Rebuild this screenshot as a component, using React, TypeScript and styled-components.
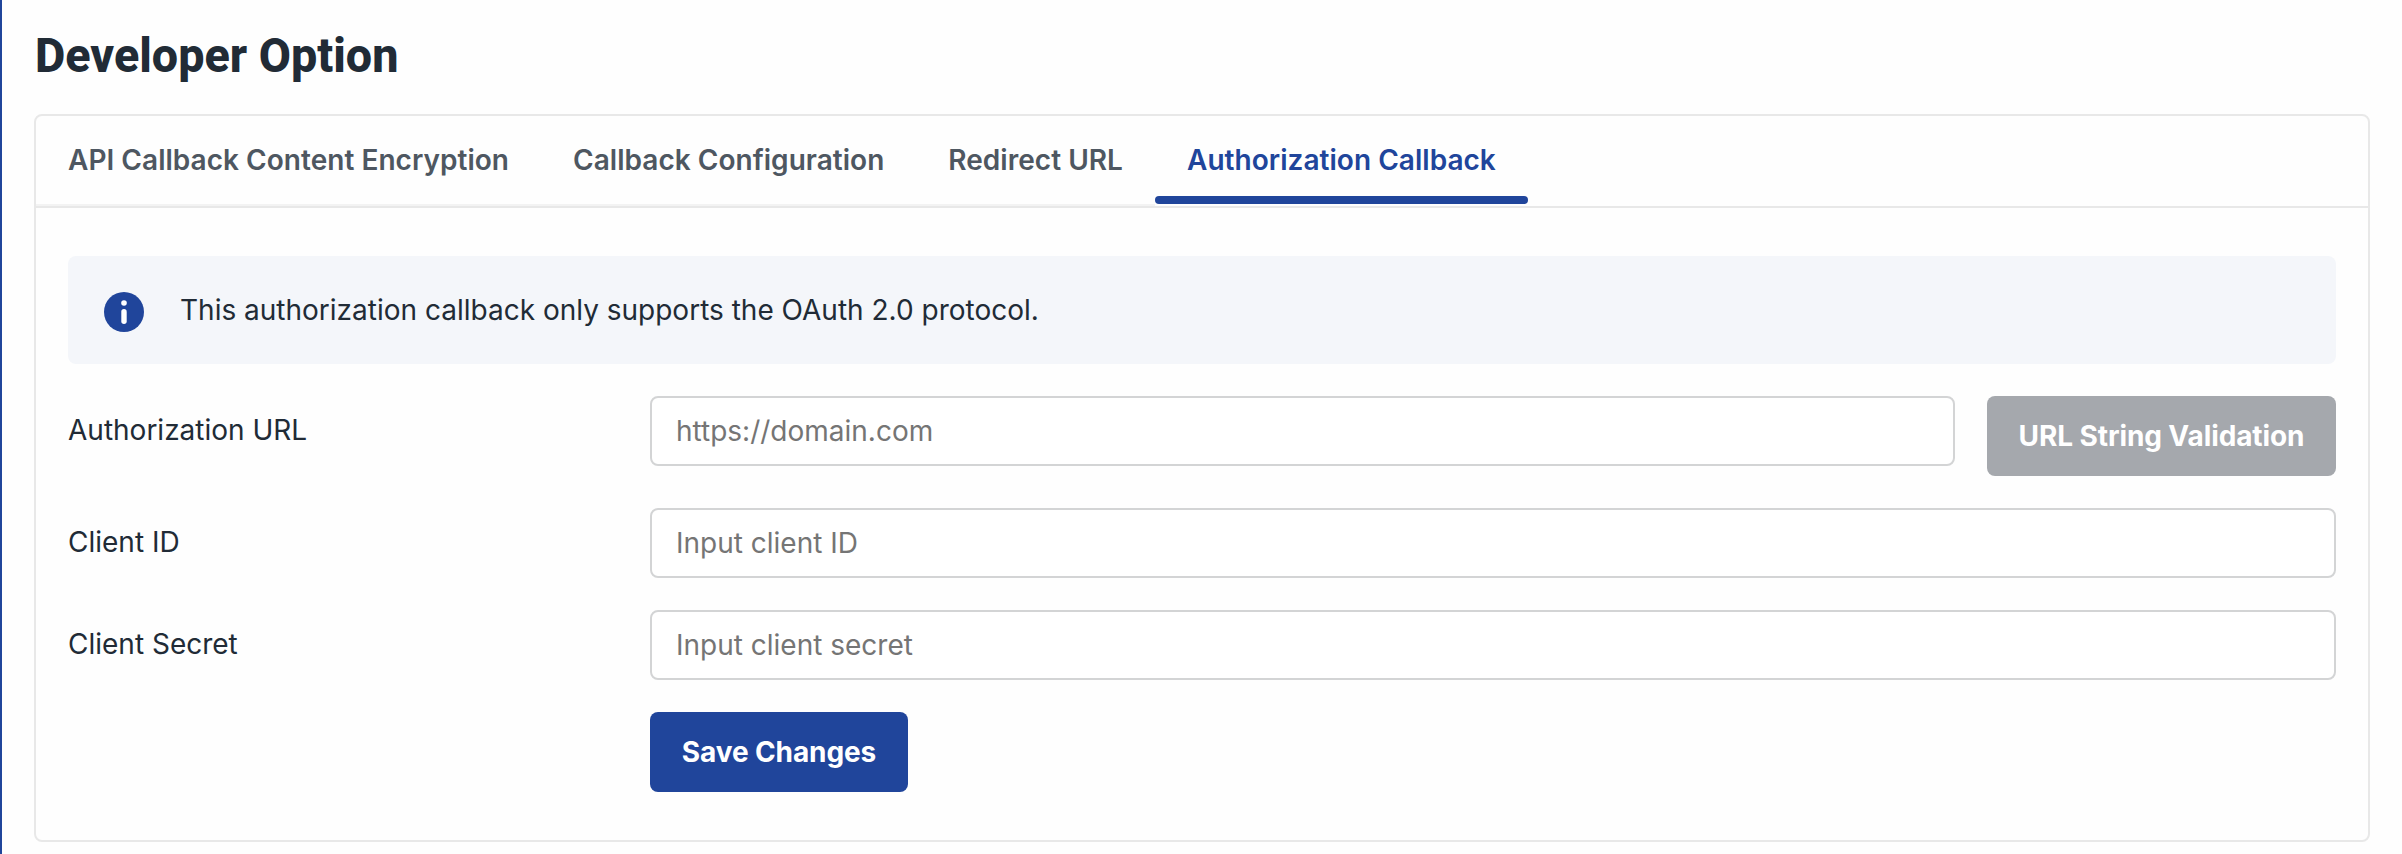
import React, { useState } from 'react';
import styled, { createGlobalStyle, css } from 'styled-components';

const colors = {
  primary: '#20459b',
  ink: '#212b36',
  muted: '#4e5761',
  line: '#e8e8e8',
  faintLine: '#f3f3f3',
  field: '#d3d4d5',
  placeholder: '#757575',
  disabled: '#a5a8ad',
  banner: '#f4f6fa',
};

const GlobalStyle = createGlobalStyle`
  *, *::before, *::after { box-sizing: border-box; }
  body {
    margin: 0;
    background: #fefefe;
    color: ${colors.ink};
    font-family: Inter, sans-serif;
    font-size: 28px;
    line-height: 42px;
  }
`;

const Page = styled.main`
  height: 854px;
  overflow: hidden;
  padding: 26px 32px 0;
  border-left: 2px solid ${colors.primary};
`;

const Title = styled.h1`
  margin: 0 0 28px;
  padding-left: 1px;
  font-family: Roboto, sans-serif;
  font-size: 48px;
  font-weight: 800;
  line-height: 60px;
  transform: scaleX(0.973);
  transform-origin: left;
`;

const Card = styled.section`
  height: 728px;
  border: 2px solid ${colors.line};
  border-radius: 8px;
`;

const TabBar = styled.nav`
  display: flex;
  height: 92px;
  border-bottom: 2px solid ${colors.line};
`;

const Tab = styled.button<{ $active: boolean }>`
  display: flex;
  flex-direction: column;
  justify-content: space-between;
  height: 90px;
  padding: 0;
  border: 0;
  border-bottom: 2px solid ${({ $active }) => ($active ? 'transparent' : colors.faintLine)};
  background: none;
  color: ${({ $active }) => ($active ? colors.primary : colors.muted)};
  font: 600 28px/42px Inter, sans-serif;
  letter-spacing: 0.03px;
  white-space: nowrap;
  cursor: pointer;

  &::after {
    content: '';
    width: 100%;
    height: 8px;
    border-radius: 4px;
    background: ${({ $active }) => ($active ? colors.primary : 'transparent')};
  }
`;

const TabLabel = styled.span`
  padding: 23px 32px 0;
`;

const Body = styled.div`
  display: flex;
  flex-direction: column;
  gap: 32px;
  padding: 48px 32px 0;
`;

const Banner = styled.div`
  display: flex;
  align-items: center;
  gap: 36px;
  height: 108px;
  padding: 4px 36px 0;
  border-radius: 8px;
  background: ${colors.banner};
`;

const BannerText = styled.p`
  margin: 0 0 4px;
`;

const Row = styled.div`
  display: grid;
  grid-template-columns: 582px 1fr;
  align-items: start;
`;

const Label = styled.label`
  padding-top: 13px;
`;

const Controls = styled.div`
  display: flex;
  align-items: flex-start;
  gap: 32px;
`;

const Field = styled.input`
  flex: 1;
  min-width: 0;
  height: 70px;
  padding: 0 24px;
  border: 2px solid ${colors.field};
  border-radius: 8px;
  outline: none;
  background: #fff;
  color: ${colors.ink};
  font: 400 28px/42px Inter, sans-serif;

  &::placeholder { color: ${colors.placeholder}; opacity: 1; }
`;

const Button = styled.button<{ $width: number; $muted?: boolean }>`
  width: ${({ $width }) => $width}px;
  height: 80px;
  padding: 0;
  border: 0;
  border-radius: 8px;
  background: ${colors.primary};
  color: #fff;
  font: 700 28px/42px Inter, sans-serif;
  letter-spacing: -0.1px;
  white-space: nowrap;
  ${({ $muted }) => $muted && css`background: ${colors.disabled};`}
`;

const SaveRow = styled.div`
  padding-left: 582px;
`;

const InfoIcon = () => (
  <svg width="40" height="40" viewBox="0 0 40 40" aria-hidden="true">
    <circle cx="20" cy="20" r="20" fill={colors.primary} />
    <circle cx="20" cy="11" r="2.8" fill="#fff" />
    <path d="M20 19.7V29.3" stroke="#fff" strokeWidth="5.4" strokeLinecap="round" />
  </svg>
);

const tabs = [
  'API Callback Content Encryption',
  'Callback Configuration',
  'Redirect URL',
  'Authorization Callback',
];

export default function App() {
  const [active, setActive] = useState(tabs[3]);
  return (
    <>
      <GlobalStyle />
      <Page>
        <Title>Developer Option</Title>
        <Card>
          <TabBar>
            {tabs.map((tab) => (
              <Tab key={tab} $active={tab === active} onClick={() => setActive(tab)}>
                <TabLabel>{tab}</TabLabel>
              </Tab>
            ))}
          </TabBar>
          <Body>
            <Banner>
              <InfoIcon />
              <BannerText>This authorization callback only supports the OAuth 2.0 protocol.</BannerText>
            </Banner>
            <Row>
              <Label htmlFor="url">Authorization URL</Label>
              <Controls>
                <Field id="url" placeholder="https://domain.com" />
                <Button $width={349} $muted>URL String Validation</Button>
              </Controls>
            </Row>
            <Row>
              <Label htmlFor="client-id">Client ID</Label>
              <Controls>
                <Field id="client-id" placeholder="Input client ID" />
              </Controls>
            </Row>
            <Row>
              <Label htmlFor="client-secret">Client Secret</Label>
              <Controls>
                <Field id="client-secret" placeholder="Input client secret" />
              </Controls>
            </Row>
            <SaveRow>
              <Button $width={258}>Save Changes</Button>
            </SaveRow>
          </Body>
        </Card>
      </Page>
    </>
  );
}
